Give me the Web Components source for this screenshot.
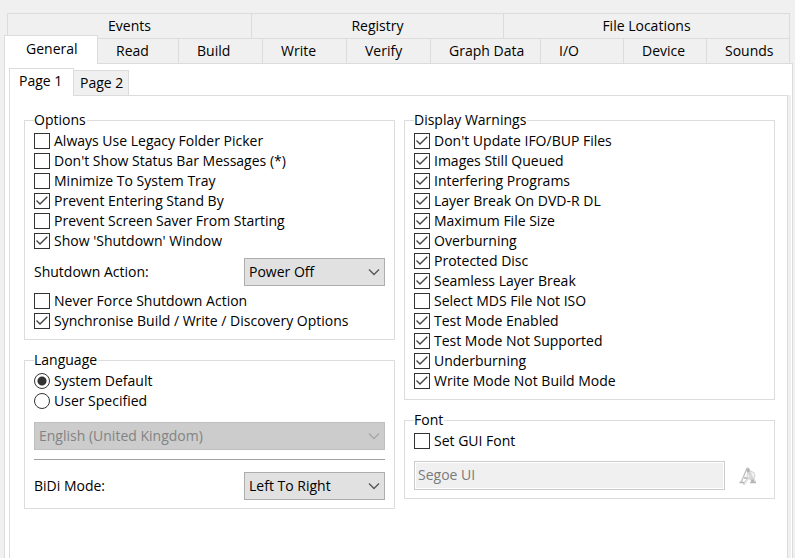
<!DOCTYPE html>
<html lang="en">
<head>
<meta charset="utf-8">
<title>Settings</title>
<style>
    html, body {
        height: 100%;
    }
    body {
        margin: 0;
        background: #f0f0f0;
        color: #000;
        font: 14px/20px "Open Sans", "Noto Sans", sans-serif;
        --line: #dcdcdc;
        --face: #f0f0f0;
    }
</style>
</head>
<body>
<settings-page></settings-page>

<script>
/**
 * Single tab. Attributes: label, selected, align (start or center).
 */
class TabButton extends HTMLElement {
    constructor() {
        super();
        this.attachShadow({ mode: 'open' });
        this.shadowRoot.innerHTML = `
            <style>
                :host {
                    display: flex;
                    min-width: 0;
                }
                button {
                    flex: 1;
                    box-sizing: border-box;
                    margin: 0;
                    padding: 0 0 0 var(--tab-pad, 18px);
                    border: solid var(--line);
                    border-width: 1px 1px 0 0;
                    background: var(--face);
                    color: inherit;
                    font: inherit;
                    text-align: left;
                    white-space: nowrap;
                }
                :host([align="center"]) button {
                    padding: 0;
                    text-align: center;
                }
                :host([first]) button {
                    border-left-width: 1px;
                }
                :host([selected]) {
                    position: relative;
                    z-index: 1;
                }
                :host([selected]) button {
                    padding-bottom: 3px;
                    border-left-width: 1px;
                    background: #fff;
                }
            </style>
            <button type="button" role="tab"></button>
        `;
        this.button = this.shadowRoot.querySelector('button');
    }

    connectedCallback() {
        this.button.textContent = this.getAttribute('label');
        this.button.setAttribute('aria-selected', this.hasAttribute('selected'));
    }
}

/**
 * Framed group with a caption.
 */
class GroupBox extends HTMLElement {
    constructor() {
        super();
        this.attachShadow({ mode: 'open' });
        this.shadowRoot.innerHTML = `
            <style>
                :host {
                    display: block;
                }
                fieldset {
                    min-width: 0;
                    margin: 0;
                    padding: 1px 9px 8px;
                    border: 1px solid var(--line);
                }
                legend {
                    padding: 0 1px 0 0;
                }
            </style>
            <fieldset>
                <legend></legend>
                <slot></slot>
            </fieldset>
        `;
    }

    connectedCallback() {
        this.shadowRoot.querySelector('legend').textContent = this.getAttribute('caption');
    }
}

/**
 * Tick box with its label.
 */
class CheckOption extends HTMLElement {
    constructor() {
        super();
        this.attachShadow({ mode: 'open' });
        this.shadowRoot.innerHTML = `
            <style>
                :host {
                    display: block;
                }
                label {
                    display: flex;
                    align-items: center;
                    gap: 4px;
                    height: 20px;
                    white-space: nowrap;
                }
                .box {
                    display: grid;
                    flex: none;
                }
                input, svg {
                    grid-area: 1 / 1;
                    width: 16px;
                    height: 16px;
                }
                input {
                    appearance: none;
                    box-sizing: border-box;
                    margin: 0;
                    border: 1px solid #333;
                    background: #fff;
                }
                svg {
                    visibility: hidden;
                    pointer-events: none;
                }
                input:checked + svg {
                    visibility: visible;
                }
            </style>
            <label>
                <span class="box">
                    <input type="checkbox">
                    <svg viewBox="0 0 16 16" fill="none" stroke="#444" stroke-width="1.4"><path d="M2.5 7.5 6 11 13.3 3.7"/></svg>
                </span>
                <slot></slot>
            </label>
        `;
        this.input = this.shadowRoot.querySelector('input');
    }

    connectedCallback() {
        this.input.checked = this.hasAttribute('checked');
    }
}

/**
 * Radio buttons, one for each entry of the "options" attribute. The first is chosen.
 */
class RadioOptions extends HTMLElement {
    constructor() {
        super();
        this.attachShadow({ mode: 'open' });
        this.shadowRoot.innerHTML = `
            <style>
                :host {
                    display: block;
                }
                label {
                    display: flex;
                    align-items: center;
                    gap: 4px;
                    height: 20px;
                }
                input {
                    appearance: none;
                    box-sizing: border-box;
                    width: 16px;
                    height: 16px;
                    margin: 0;
                    border: 1px solid #333;
                    border-radius: 50%;
                    background: #fff;
                }
                input:checked {
                    background: radial-gradient(circle, #333 4px, #fff 5px);
                }
            </style>
        `;
    }

    connectedCallback() {
        this.getAttribute('options').split('|').forEach((text, i) => {
            const label = document.createElement('label');
            const input = document.createElement('input');
            input.type = 'radio';
            input.name = 'choice';
            input.checked = i === 0;
            label.append(input, text);
            this.shadowRoot.append(label);
        });
    }
}

class SelectField extends HTMLElement {
    constructor() {
        super();
        this.attachShadow({ mode: 'open' });
        this.shadowRoot.innerHTML = `
            <style>
                :host {
                    display: grid;
                    grid-template-columns: 1fr 141px;
                    align-items: center;
                }
                :host([wide]) {
                    grid-template-columns: 1fr;
                }
                :host([wide]) label {
                    display: none;
                }
                .field {
                    display: grid;
                    align-items: center;
                }
                select, svg {
                    grid-area: 1 / 1;
                }
                select {
                    appearance: none;
                    box-sizing: border-box;
                    width: 100%;
                    height: 28px;
                    margin: 0;
                    padding: 0 24px 0 4px;
                    border: 1px solid #adadad;
                    border-radius: 0;
                    background: #e1e1e1;
                    color: inherit;
                    font: inherit;
                }
                select:disabled {
                    border-color: #bfbfbf;
                    background: #ccc;
                    color: #838383;
                    opacity: 1;
                }
                svg {
                    justify-self: end;
                    width: 12px;
                    height: 8px;
                    margin-right: 5px;
                    stroke: #555;
                    pointer-events: none;
                }
                select:disabled + svg {
                    stroke: #a5a5a5;
                }
            </style>
            <label for="list"></label>
            <span class="field">
                <select id="list"></select>
                <svg viewBox="0 0 12 8" fill="none" stroke-width="1.3"><path d="M1 1.5 6 6.5 11 1.5"/></svg>
            </span>
        `;
        this.select = this.shadowRoot.querySelector('select');
    }

    connectedCallback() {
        this.shadowRoot.querySelector('label').textContent = this.getAttribute('label');
        this.select.setAttribute('aria-label', this.getAttribute('label'));
        this.select.add(new Option(this.getAttribute('value')));
        this.select.disabled = this.hasAttribute('disabled');
    }
}

/**
 * Font name box and the button that opens the font chooser.
 */
class FontField extends HTMLElement {
    constructor() {
        super();
        this.attachShadow({ mode: 'open' });
        this.shadowRoot.innerHTML = `
            <style>
                :host {
                    display: flex;
                    align-items: center;
                    gap: 9px;
                }
                input {
                    flex: 1;
                    box-sizing: border-box;
                    min-width: 0;
                    height: 29px;
                    margin: 0;
                    padding: 0 3px 2px;
                    border: 1px solid #ccc;
                    background: #f0f0f0;
                    box-shadow: inset 0 0 0 1px #fff;
                    color: #7a7a7a;
                    font: inherit;
                }
                button {
                    display: grid;
                    place-items: center;
                    width: 28px;
                    height: 28px;
                    padding: 0;
                    border: 0;
                    margin-right: 3px;
                    background: none;
                }
                svg {
                    width: 20px;
                    height: 20px;
                }
            </style>
            <input type="text" aria-label="Font name" disabled>
            <button type="button" aria-label="Choose font" disabled>
                <svg viewBox="0 0 20 20" fill="none">
                    <path d="M9 1.5 11 3l6.5 13.5" stroke="#dcdcdc" stroke-width="1.5"/>
                    <path d="M9 2.5 3.2 16" stroke="#c4c4c4" stroke-width="1.5"/>
                    <path d="M9.3 2.5l5.8 13.5" stroke="#b4b4b4" stroke-width="3"/>
                    <path d="M1.5 16.5h5M12 16.5h6M6 12h6" stroke="#b4b4b4" stroke-width="1.5"/>
                    <circle cx="13" cy="9.5" r="4" fill="#eee" fill-opacity=".6" stroke="#d0d0d0"/>
                    <path d="m10 12.5-4.5 6" stroke="#c6c6c6" stroke-width="2"/>
                    <path d="m10.5 12.5-4 5" stroke="#f4f4f4"/>
                </svg>
            </button>
        `;
    }

    connectedCallback() {
        this.shadowRoot.querySelector('input').value = this.getAttribute('value');
    }
}

/**
 * The settings page: two rows of tabs, the sub-pages and the groups of the first one.
 */
class SettingsPage extends HTMLElement {
    constructor() {
        super();
        this.attachShadow({ mode: 'open' });
        this.shadowRoot.innerHTML = `
            <style>
                :host {
                    display: flex;
                    flex-direction: column;
                    box-sizing: border-box;
                    min-height: 100%;
                    padding: 13px 2px 0 4px;
                }
                .tabs {
                    display: grid;
                    margin: 0 3px;
                    grid-auto-rows: 25px;
                }
                .back {
                    grid-template-columns: 245fr 252fr 286fr;
                }
                .front {
                    grid-template-columns: 91fr 81fr 84fr 84fr 84fr 110fr 83fr 83fr 83fr;
                }
                .front [selected] {
                    --tab-pad: 21px;
                    margin: -3px 0 -1px -3px;
                }
                .panel {
                    flex: 1;
                    display: flex;
                    flex-direction: column;
                    padding: 4px 4px 0;
                    border: solid var(--line);
                    border-width: 1px 1px 0;
                    background: #fff;
                }
                .subtabs {
                    display: flex;
                    align-items: flex-end;
                    height: 27px;
                }
                .subtabs tab-button {
                    --tab-pad: 6px;
                    width: 55px;
                    height: 25px;
                }
                .subtabs [selected] {
                    --tab-pad: 9px;
                    width: 65px;
                    height: 28px;
                    margin-bottom: -1px;
                }
                .page {
                    flex: 1;
                    display: grid;
                    grid-template-columns: 1fr 1fr;
                    align-items: start;
                    gap: 9px;
                    padding: 14px 12px 0 14px;
                    border: solid var(--line);
                    border-width: 1px 1px 0;
                    box-shadow: 3px 0 var(--face);
                }
                .column {
                    display: grid;
                    gap: 10px;
                }
                .action {
                    margin: 7px 0 5px;
                }
                .language {
                    margin-top: 11px;
                }
                hr {
                    height: 1px;
                    margin: 9px 0 12px;
                    border: 0;
                    background: #a0a0a0;
                }
                .language-group {
                    --gap: 9px;
                }
                font-field {
                    margin-top: 10px;
                }
            </style>
            <div class="tabs back" role="tablist">
                <tab-button label="Events" align="center" first></tab-button>
                <tab-button label="Registry" align="center"></tab-button>
                <tab-button label="File Locations" align="center"></tab-button>
            </div>
            <div class="tabs front" role="tablist">
                <tab-button label="General" selected></tab-button>
                <tab-button label="Read"></tab-button>
                <tab-button label="Build"></tab-button>
                <tab-button label="Write"></tab-button>
                <tab-button label="Verify"></tab-button>
                <tab-button label="Graph Data"></tab-button>
                <tab-button label="I/O"></tab-button>
                <tab-button label="Device"></tab-button>
                <tab-button label="Sounds"></tab-button>
            </div>
            <div class="panel">
                <div class="subtabs" role="tablist">
                    <tab-button label="Page 1" selected></tab-button>
                    <tab-button label="Page 2"></tab-button>
                </div>
                <div class="page">
                    <div class="column">
                        <group-box caption="Options">
                            <check-option>Always Use Legacy Folder Picker</check-option>
                            <check-option>Don't Show Status Bar Messages (*)</check-option>
                            <check-option>Minimize To System Tray</check-option>
                            <check-option checked>Prevent Entering Stand By</check-option>
                            <check-option>Prevent Screen Saver From Starting</check-option>
                            <check-option checked>Show 'Shutdown' Window</check-option>
                            <select-field class="action" label="Shutdown Action:" value="Power Off"></select-field>
                            <check-option>Never Force Shutdown Action</check-option>
                            <check-option checked>Synchronise Build / Write / Discovery Options</check-option>
                        </group-box>
                        <group-box caption="Language">
                            <radio-options options="System Default|User Specified"></radio-options>
                            <select-field class="language" wide label="Language" value="English (United Kingdom)" disabled></select-field>
                            <hr>
                            <select-field label="BiDi Mode:" value="Left To Right"></select-field>
                        </group-box>
                    </div>
                    <div class="column">
                        <group-box caption="Display Warnings">
                            <check-option checked>Don't Update IFO/BUP Files</check-option>
                            <check-option checked>Images Still Queued</check-option>
                            <check-option checked>Interfering Programs</check-option>
                            <check-option checked>Layer Break On DVD-R DL</check-option>
                            <check-option checked>Maximum File Size</check-option>
                            <check-option checked>Overburning</check-option>
                            <check-option checked>Protected Disc</check-option>
                            <check-option checked>Seamless Layer Break</check-option>
                            <check-option>Select MDS File Not ISO</check-option>
                            <check-option checked>Test Mode Enabled</check-option>
                            <check-option checked>Test Mode Not Supported</check-option>
                            <check-option checked>Underburning</check-option>
                            <check-option checked>Write Mode Not Build Mode</check-option>
                        </group-box>
                        <group-box caption="Font">
                            <check-option>Set GUI Font</check-option>
                            <font-field value="Segoe UI"></font-field>
                        </group-box>
                    </div>
                </div>
            </div>
        `;
    }
}

customElements.define('tab-button', TabButton);
customElements.define('group-box', GroupBox);
customElements.define('check-option', CheckOption);
customElements.define('radio-options', RadioOptions);
customElements.define('select-field', SelectField);
customElements.define('font-field', FontField);
customElements.define('settings-page', SettingsPage);
</script>
</body>
</html>
